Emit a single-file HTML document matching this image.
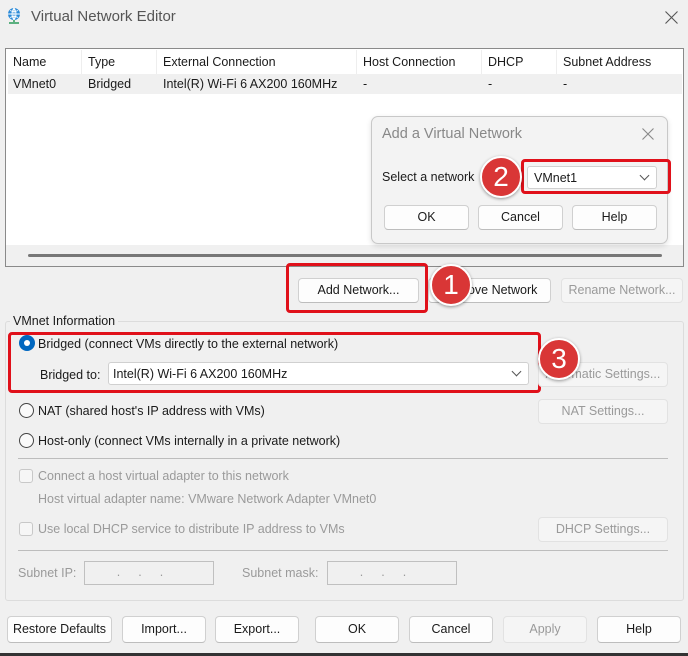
<!DOCTYPE html>
<html><head><meta charset="utf-8"><style>
*{box-sizing:border-box;margin:0;padding:0}
body{width:688px;height:656px;background:#f0f0f0;font-family:"Liberation Sans",sans-serif;font-size:12.5px;color:#1a1a1a;position:relative;overflow:hidden}
.a{position:absolute;white-space:nowrap}
.btn{position:absolute;background:#fdfdfd;border:1px solid #d0d0d0;border-bottom-color:#bdbdbd;border-radius:4px;text-align:center;font-size:12.5px;color:#1a1a1a}
.dis{background:#f5f5f5;border-color:#e2e2e2;color:#9a9a9a}
.red{position:absolute;border:3px solid #e0101a;border-radius:4px}
.badge{position:absolute;width:42px;height:42px;border-radius:50%;background:#d93636;border:2px solid #fff;box-shadow:0 1px 3px rgba(0,0,0,.4);color:#fff;font-size:28px;text-align:center;line-height:38px}
.radio{position:absolute;width:15px;height:15px;border:1px solid #444;border-radius:50%;background:#fafafa}
.chk{position:absolute;width:14px;height:14px;border:1px solid #c8c8c8;border-radius:3px;background:#f6f6f6}
.g{color:#9a9a9a}
.sep{position:absolute;height:1px;background:#bdbdbd}
.combo{position:absolute;background:#fff;border:1px solid #d0d0d0;border-radius:3px}
.chev{position:absolute;right:8px;top:5px;width:7px;height:7px;border-right:1px solid #555;border-bottom:1px solid #555;transform:rotate(45deg)}
</style></head><body>
<svg class="a" style="left:6px;top:7px" width="16" height="18" viewBox="0 0 16 18"><circle cx="8" cy="7" r="6" fill="#2a8ad8"/><path d="M2 7h12M8 1v12M4 3.5q4 2 8 0M4 10.5q4-2 8 0M8 1q-4 6 0 12M8 1q4 6 0 12" stroke="#fff" stroke-width="0.9" fill="none"/><path d="M8 13v2M3 16h10" stroke="#2a9a5a" stroke-width="1.5"/></svg>
<div class="a" style="left:31px;top:8px;font-size:15px;color:#555">Virtual Network Editor</div>
<svg class="a" style="left:665px;top:11px" width="13" height="13"><path d="M0.5 0.5L12.5 12.5M12.5 0.5L0.5 12.5" stroke="#555" stroke-width="1.1"/></svg>

<div class="a" style="left:5px;top:48px;width:679px;height:219px;border:1px solid #8a8a8a;background:#fff"></div>
<div class="a" style="left:81px;top:50px;width:1px;height:24px;background:#eee"></div>
<div class="a" style="left:156px;top:50px;width:1px;height:24px;background:#eee"></div>
<div class="a" style="left:356px;top:50px;width:1px;height:24px;background:#eee"></div>
<div class="a" style="left:481px;top:50px;width:1px;height:24px;background:#eee"></div>
<div class="a" style="left:556px;top:50px;width:1px;height:24px;background:#eee"></div>
<div class="a" style="left:8px;top:74px;width:674px;height:20px;background:#f0f0f0"></div>
<div class="a" style="left:13px;top:55px">Name</div><div class="a" style="left:88px;top:55px">Type</div><div class="a" style="left:163px;top:55px">External Connection</div><div class="a" style="left:363px;top:55px">Host Connection</div><div class="a" style="left:488px;top:55px">DHCP</div><div class="a" style="left:563px;top:55px">Subnet Address</div>
<div class="a" style="left:13px;top:77px">VMnet0</div><div class="a" style="left:88px;top:77px">Bridged</div><div class="a" style="left:163px;top:77px">Intel(R) Wi-Fi 6 AX200 160MHz</div><div class="a" style="left:363px;top:77px">-</div><div class="a" style="left:488px;top:77px">-</div><div class="a" style="left:563px;top:77px">-</div>
<div class="a" style="left:6px;top:245px;width:677px;height:21px;background:#f0f0f0"></div>
<div class="a" style="left:28px;top:254px;width:634px;height:3px;background:#777;border-radius:2px"></div>

<div class="a" style="left:371px;top:116px;width:297px;height:128px;background:#f3f3f3;border:1px solid #c8c8c8;border-radius:7px;box-shadow:0 2px 6px rgba(0,0,0,.12)"></div>
<div class="a" style="left:382px;top:126px;font-size:14.5px;color:#888">Add a Virtual Network</div>
<svg class="a" style="left:642px;top:128px" width="12" height="12"><path d="M0.5 0.5L11.5 11.5M11.5 0.5L0.5 11.5" stroke="#888" stroke-width="1.1"/></svg>
<div class="a" style="left:382px;top:170px">Select a network</div>
<div class="combo" style="left:527px;top:166px;width:130px;height:23px"><div class="a" style="left:6px;top:4px">VMnet1</div><div class="chev"></div></div>
<div class="red" style="left:521px;top:159px;width:150px;height:35px"></div>
<div class="btn" style="left:384px;top:205px;width:85px;height:25px;line-height:23px">OK</div>
<div class="btn" style="left:478px;top:205px;width:85px;height:25px;line-height:23px">Cancel</div>
<div class="btn" style="left:572px;top:205px;width:85px;height:25px;line-height:23px">Help</div>
<div class="badge" style="left:480px;top:156px">2</div>

<div class="btn" style="left:298px;top:278px;width:121px;height:25px;line-height:23px">Add Network...</div>
<div class="btn" style="left:428px;top:278px;width:123px;height:25px;line-height:23px">Remove Network</div>
<div class="btn dis" style="left:561px;top:278px;width:122px;height:25px;line-height:23px">Rename Network...</div>
<div class="red" style="left:286px;top:263px;width:142px;height:50px"></div>
<div class="badge" style="left:430px;top:264px">1</div>

<div class="a" style="left:5px;top:321px;width:679px;height:280px;border:1px solid #dcdcdc;border-radius:3px"></div>
<div class="a" style="left:10px;top:314px;padding:0 3px;background:#f0f0f0">VMnet Information</div>
<div class="a" style="left:19px;top:335px;width:16px;height:16px;border-radius:50%;background:#0067c0"><div class="a" style="left:5px;top:5px;width:6px;height:6px;border-radius:50%;background:#fff"></div></div>
<div class="a" style="left:38px;top:337px">Bridged (connect VMs directly to the external network)</div>
<div class="a" style="left:40px;top:368px">Bridged to:</div>
<div class="combo" style="left:108px;top:362px;width:421px;height:23px"><div class="a" style="left:4px;top:4px">Intel(R) Wi-Fi 6 AX200 160MHz</div><div class="chev"></div></div>
<div class="red" style="left:8px;top:332px;width:533px;height:61px"></div>
<div class="btn dis" style="left:538px;top:362px;width:130px;height:25px;line-height:23px">Automatic Settings...</div>
<div class="badge" style="left:538px;top:338px">3</div>
<div class="radio" style="left:19px;top:403px"></div><div class="a" style="left:38px;top:404px">NAT (shared host's IP address with VMs)</div>
<div class="btn dis" style="left:538px;top:399px;width:130px;height:25px;line-height:23px">NAT Settings...</div>
<div class="radio" style="left:19px;top:433px"></div><div class="a" style="left:38px;top:434px">Host-only (connect VMs internally in a private network)</div>
<div class="sep" style="left:18px;top:458px;width:650px"></div>
<div class="chk" style="left:19px;top:469px"></div><div class="a g" style="left:38px;top:469px">Connect a host virtual adapter to this network</div>
<div class="a g" style="left:38px;top:492px">Host virtual adapter name: VMware Network Adapter VMnet0</div>
<div class="chk" style="left:19px;top:522px"></div><div class="a g" style="left:38px;top:522px">Use local DHCP service to distribute IP address to VMs</div>
<div class="btn dis" style="left:538px;top:517px;width:130px;height:25px;line-height:23px">DHCP Settings...</div>
<div class="sep" style="left:18px;top:550px;width:650px"></div>
<div class="a g" style="left:18px;top:566px">Subnet IP:</div>
<div class="a g" style="left:84px;top:561px;width:130px;height:24px;border:1px solid #c0c0c0;text-align:center;letter-spacing:18px;line-height:20px">...</div>
<div class="a g" style="left:242px;top:566px">Subnet mask:</div>
<div class="a g" style="left:327px;top:561px;width:130px;height:24px;border:1px solid #c0c0c0;text-align:center;letter-spacing:18px;line-height:20px">...</div>

<div class="btn" style="left:7px;top:616px;width:105px;height:27px;line-height:25px">Restore Defaults</div>
<div class="btn" style="left:122px;top:616px;width:84px;height:27px;line-height:25px">Import...</div>
<div class="btn" style="left:215px;top:616px;width:84px;height:27px;line-height:25px">Export...</div>
<div class="btn" style="left:315px;top:616px;width:84px;height:27px;line-height:25px">OK</div>
<div class="btn" style="left:409px;top:616px;width:84px;height:27px;line-height:25px">Cancel</div>
<div class="btn dis" style="left:503px;top:616px;width:84px;height:27px;line-height:25px">Apply</div>
<div class="btn" style="left:597px;top:616px;width:84px;height:27px;line-height:25px">Help</div>
<div class="a" style="left:0;top:653px;width:688px;height:3px;background:#333"></div>
</body></html>
